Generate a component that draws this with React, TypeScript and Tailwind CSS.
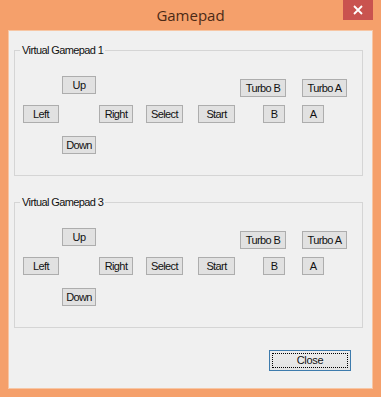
import React from "react";

const btn =
  "h-[18px] shrink-0 flex items-center justify-center bg-[#e1e1e1] border border-[#adadad] text-[11px] tracking-[-0.6px] leading-none text-[#111]";

function Group({ title }: { title: string }) {
  return (
    <fieldset className="ml-[5px] w-[349px] h-[133px] border border-[#d5d5d5] min-w-0 p-0 m-0 shrink-0">
      <legend className="ml-[5px] px-[2px] text-[11px] tracking-[-0.6px] leading-[14px] text-[#111]">{title}</legend>
      <div className="flex flex-col pl-0">
        <div className="flex items-start mt-[19px]">
          <div className={`${btn} ml-[47px] w-[34px]`}>Up</div>
          <div className={`${btn} ml-[144px] mt-[3px] w-[46px]`}>Turbo B</div>
          <div className={`${btn} ml-[16px] mt-[3px] w-[45px]`}>Turbo A</div>
        </div>
        <div className="flex items-start mt-[8px]">
          <div className={`${btn} ml-[8px] w-[36px]`}>Left</div>
          <div className={`${btn} ml-[40px] w-[34px]`}>Right</div>
          <div className={`${btn} ml-[13px] w-[37px]`}>Select</div>
          <div className={`${btn} ml-[15px] w-[37px]`}>Start</div>
          <div className={`${btn} ml-[28px] w-[22px]`}>B</div>
          <div className={`${btn} ml-[17px] w-[22px]`}>A</div>
        </div>
        <div className="flex items-start mt-[13px]">
          <div className={`${btn} ml-[47px] w-[34px]`}>Down</div>
        </div>
      </div>
    </fieldset>
  );
}

export default function App() {
  return (
    <div
      className="w-[381px] h-[397px] bg-[#f5a06b] flex flex-col"
      style={{ fontFamily: '"Liberation Sans", Arial, sans-serif' }}
    >
      <div className="h-[30px] shrink-0 flex items-start relative">
        <div
          className="flex-1 text-center text-[15px] leading-[30px] text-[#4b2a16]"
          style={{ fontFamily: '"Open Sans", "Noto Sans", sans-serif' }}
        >
          Gamepad
        </div>
        <div className="absolute left-[343px] top-0 w-[30px] h-[20px] bg-[#c9534f] flex items-center justify-center text-white">
          <svg width="10" height="10" viewBox="0 0 10 10">
            <path d="M1 1 L9 9 M9 1 L1 9" stroke="white" strokeWidth="1.8" />
          </svg>
        </div>
      </div>
      <div className="ml-[8px] w-[365px] h-[359px] bg-[#f0f0f0] border border-[#f7c6a4] flex flex-col">
        <div className="h-[12px] shrink-0" />
        <Group title="Virtual Gamepad 1" />
        <div className="h-[19px] shrink-0" />
        <Group title="Virtual Gamepad 3" />
        <div className="flex justify-end pr-[21px] mt-[22px]">
          <div className="w-[82px] h-[21px] border border-[#3d7bad] bg-gradient-to-b from-[#ececec] to-[#e3e3e3] p-[2px]">
            <div className="w-full h-full border border-dotted border-black flex items-center justify-center text-[11px] tracking-[-0.3px] leading-none text-[#111]">
              Close
            </div>
          </div>
        </div>
      </div>
    </div>
  );
}
